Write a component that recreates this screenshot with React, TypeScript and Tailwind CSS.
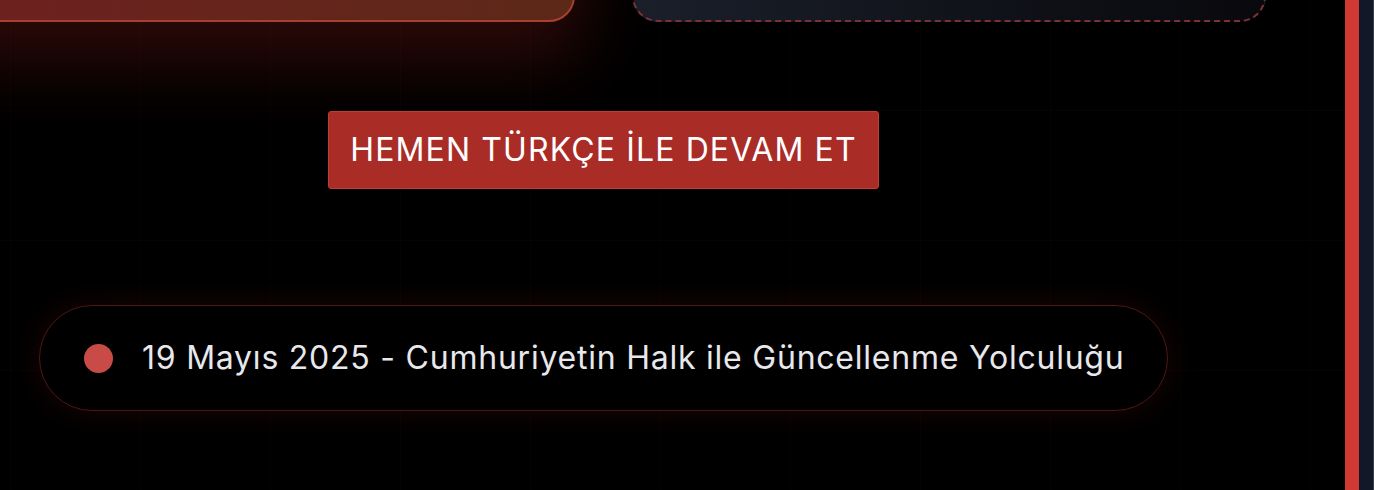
import React from "react"

export default function App() {
  return (
    <div className="flex h-[490px] w-[1374px] overflow-hidden bg-black font-['Inter','Noto_Sans',sans-serif]">
      <main className="relative flex-1 overflow-hidden bg-black bg-[linear-gradient(to_right,rgba(110,35,35,0.07)_1px,transparent_1px),linear-gradient(to_bottom,rgba(110,35,35,0.07)_1px,transparent_1px)] bg-[size:130px_130px] bg-[position:10px_110px]">
        <div className="ml-[-59px] flex w-[1325px] flex-col items-center">
          {/* cards, scrolled mostly out of view */}
          <div className="mt-[-178px] grid w-full grid-cols-2 gap-[57px]">
            <div className="h-[200px] rounded-[26px] border-2 border-[#a6402f] bg-gradient-to-r from-[#6f2020] to-[#5c2818] shadow-[0_30px_70px_10px_rgba(110,25,20,0.4)]" />
            <div className="h-[200px] rounded-[26px] border-2 border-dashed border-[#7b3236] bg-gradient-to-r from-[#1a1f2a] to-[#09090d]" />
          </div>

          <button className="mt-[89px] h-[78px] w-[551px] rounded-[3px] border border-[#bf3d33] bg-[#a92c27] text-[32px] font-normal tracking-[0.035em] text-white">
            HEMEN TÜRKÇE İLE DEVAM ET
          </button>

          <div className="mt-[116px] flex h-[106px] w-[1129px] items-center rounded-full border border-[#4e1616] bg-black pl-[44px] shadow-[0_0_30px_rgba(170,40,30,0.16)]">
            <span className="h-[29px] w-[29px] shrink-0 rounded-full bg-[#c84b47]" />
            <span className="ml-[29px] text-[32px] tracking-[0.024em] text-[#e8e8ec]">
              19 Mayıs 2025 - Cumhuriyetin Halk ile Güncellenme Yolculuğu
            </span>
          </div>
        </div>
      </main>
      <div className="w-[14px] bg-[#d13a32]" />
      <div className="w-[15px] border-r border-[#3b3f4a] bg-[#111827]" />
    </div>
  )
}
